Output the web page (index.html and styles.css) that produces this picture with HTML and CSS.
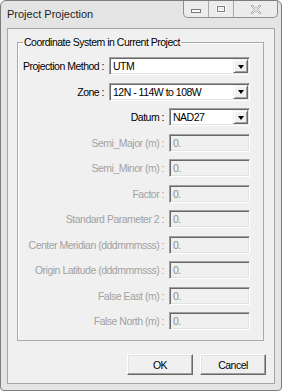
FILE: index.html
```html
<!DOCTYPE html>
<html lang="en">
<head>
    <meta charset="UTF-8">
    <title>Project Projection</title>
    <link rel="stylesheet" href="styles.css">
</head>
<body>
    <div class="window">
        <div class="titlebar">
            <span class="title">Project Projection</span>
            <div class="caption">
                <span class="cap-btn min"><span class="min-icon"></span></span>
                <span class="cap-btn max"><span class="max-icon"></span></span>
                <span class="cap-btn close">
                    <svg width="12" height="11" viewBox="0 0 12 11">
                        <path d="M2 1 L6 4.5 L10 1 L11 2 L7.5 5.5 L11 9 L10 10 L6 6.5 L2 10 L1 9 L4.5 5.5 L1 2 Z" fill="#f4f4f4" stroke="#a9a9a9" stroke-width="1"/>
                    </svg>
                </span>
            </div>
        </div>

        <div class="client">
            <fieldset class="group">
                <legend>Coordinate System in Current Project</legend>

                <div class="rows">
                    <div class="row">
                        <label>Projection Method :</label>
                        <div class="combo wide">
                            <span class="combo-value">UTM</span>
                            <span class="combo-arrow"></span>
                        </div>
                    </div>
                    <div class="row">
                        <label>Zone :</label>
                        <div class="combo wide">
                            <span class="combo-value">12N - 114W to 108W</span>
                            <span class="combo-arrow"></span>
                        </div>
                    </div>
                    <div class="row">
                        <label>Datum :</label>
                        <div class="combo">
                            <span class="combo-value">NAD27</span>
                            <span class="combo-arrow"></span>
                        </div>
                    </div>
                    <div class="row disabled">
                        <label>Semi_Major (m) :</label>
                        <input type="text" value="0." disabled>
                    </div>
                    <div class="row disabled">
                        <label>Semi_Minor (m) :</label>
                        <input type="text" value="0." disabled>
                    </div>
                    <div class="row disabled">
                        <label>Factor :</label>
                        <input type="text" value="0." disabled>
                    </div>
                    <div class="row disabled">
                        <label>Standard Parameter 2 :</label>
                        <input type="text" value="0." disabled>
                    </div>
                    <div class="row disabled">
                        <label>Center Meridian (dddmmmsss) :</label>
                        <input type="text" value="0." disabled>
                    </div>
                    <div class="row disabled">
                        <label>Origin Latitude (dddmmmsss) :</label>
                        <input type="text" value="0." disabled>
                    </div>
                    <div class="row disabled">
                        <label>False East (m) :</label>
                        <input type="text" value="0." disabled>
                    </div>
                    <div class="row disabled">
                        <label>False North (m) :</label>
                        <input type="text" value="0." disabled>
                    </div>
                </div>
            </fieldset>

            <div class="buttons">
                <button>OK</button>
                <button>Cancel</button>
            </div>
        </div>
    </div>
</body>
</html>
```

FILE: styles.css
```css
body {
    margin: 0;
    background: #ffffff;
    font-family: "Liberation Sans", Arial, sans-serif;
    font-size: 10.5px;
    letter-spacing: -0.5px;
}

.window {
    width: 282px;
    height: 391px;
    box-sizing: border-box;
    border: 1px solid #7c7c7c;
    border-radius: 6px 6px 4px 4px;
    background: #e4e4e4;
    display: flex;
    flex-direction: column;
}

.titlebar {
    height: 27px;
    display: flex;
    justify-content: space-between;
    align-items: flex-start;
    padding-left: 6px;
}
.title {
    font-size: 11px;
    letter-spacing: 0;
    line-height: 27px;
    color: #1e1e1e;
}

.caption {
    display: flex;
    margin-right: 3px;
    height: 16px;
    border: 1px solid #8e8e8e;
    border-top: none;
    border-radius: 0 0 5px 5px;
    background: #ececec;
    overflow: hidden;
}
.cap-btn {
    display: flex;
    align-items: center;
    justify-content: center;
    height: 16px;
}
.min, .max {
    width: 24px;
    border-right: 1px solid #a8a8a8;
}
.close {
    width: 43px;
}
.min-icon {
    width: 8px;
    height: 2px;
    margin-top: 4px;
    border: 1px solid #7b7b7b;
    background: #fafafa;
}
.max-icon {
    width: 6px;
    height: 4px;
    border: 1px solid #7b7b7b;
    box-shadow: inset 0 0 0 1px #fafafa, 0 0 0 1px #fafafa;
}

.client {
    flex: 1;
    margin: 0 6px 6px 6px;
    border: 1px solid #a5a5a5;
    background: #f0f0f0;
    display: flex;
    flex-direction: column;
}

.group {
    min-width: 0;
    margin: 7px 10px 0 9px;
    padding: 0 13px 0 0;
    height: 305px;
    box-sizing: border-box;
    border: 1px solid #a9a9a9;
    box-shadow: inset 1px 1px 0 #ffffff;
}
.group legend {
    margin-left: 5px;
    padding: 0 1px;
    line-height: 13px;
    color: #000000;
}

.rows {
    display: flex;
    flex-direction: column;
    gap: 7.5px;
    margin-top: 8px;
}
.row {
    display: flex;
    justify-content: flex-end;
    align-items: center;
    gap: 5px;
    height: 18px;
}
.row label {
    white-space: nowrap;
    color: #000000;
}
.row.disabled label {
    color: #a2a2a2;
}

.combo, .row input {
    width: 81px;
    height: 18px;
    box-sizing: border-box;
    border-top: 1px solid #a0a0a0;
    border-left: 1px solid #a0a0a0;
    border-right: 1px solid #ffffff;
    border-bottom: 1px solid #ffffff;
    box-shadow: inset 1px 1px 0 #696969, inset -1px -1px 0 #e3e3e3;
}
.combo {
    display: flex;
    align-items: center;
    background: #ffffff;
    padding: 1px 1px 1px 3px;
}
.combo.wide {
    width: 141px;
}
.combo-value {
    flex: 1;
    font-size: 10.5px;
    white-space: nowrap;
    color: #000000;
}
.combo-arrow {
    width: 15px;
    height: 14px;
    box-sizing: border-box;
    background: #f0f0f0;
    border-top: 1px solid #f0f0f0;
    border-left: 1px solid #f0f0f0;
    border-right: 1px solid #696969;
    border-bottom: 1px solid #696969;
    box-shadow: inset 1px 1px 0 #ffffff, inset -1px -1px 0 #a0a0a0;
    display: flex;
    align-items: center;
    justify-content: center;
}
.combo-arrow::after {
    content: "";
    border-left: 3.5px solid transparent;
    border-right: 3.5px solid transparent;
    border-top: 4px solid #000000;
    margin-top: 1px;
}

.row input {
    margin: 0;
    padding: 0 3px;
    background: #f0f0f0;
    font-family: inherit;
    font-size: 10.5px;
    letter-spacing: inherit;
    color: #8e8e8e;
}

.buttons {
    display: flex;
    justify-content: flex-end;
    gap: 7px;
    margin: 13px 8px 0 0;
}
.buttons button {
    width: 66px;
    height: 21px;
    margin: 0;
    padding: 0;
    background: #f0f0f0;
    font-family: inherit;
    font-size: 10.5px;
    letter-spacing: inherit;
    color: #000000;
    border-top: 1px solid #ffffff;
    border-left: 1px solid #ffffff;
    border-right: 1px solid #696969;
    border-bottom: 1px solid #696969;
    box-shadow: inset -1px -1px 0 #a0a0a0, inset 1px 1px 0 #e3e3e3;
}
```
